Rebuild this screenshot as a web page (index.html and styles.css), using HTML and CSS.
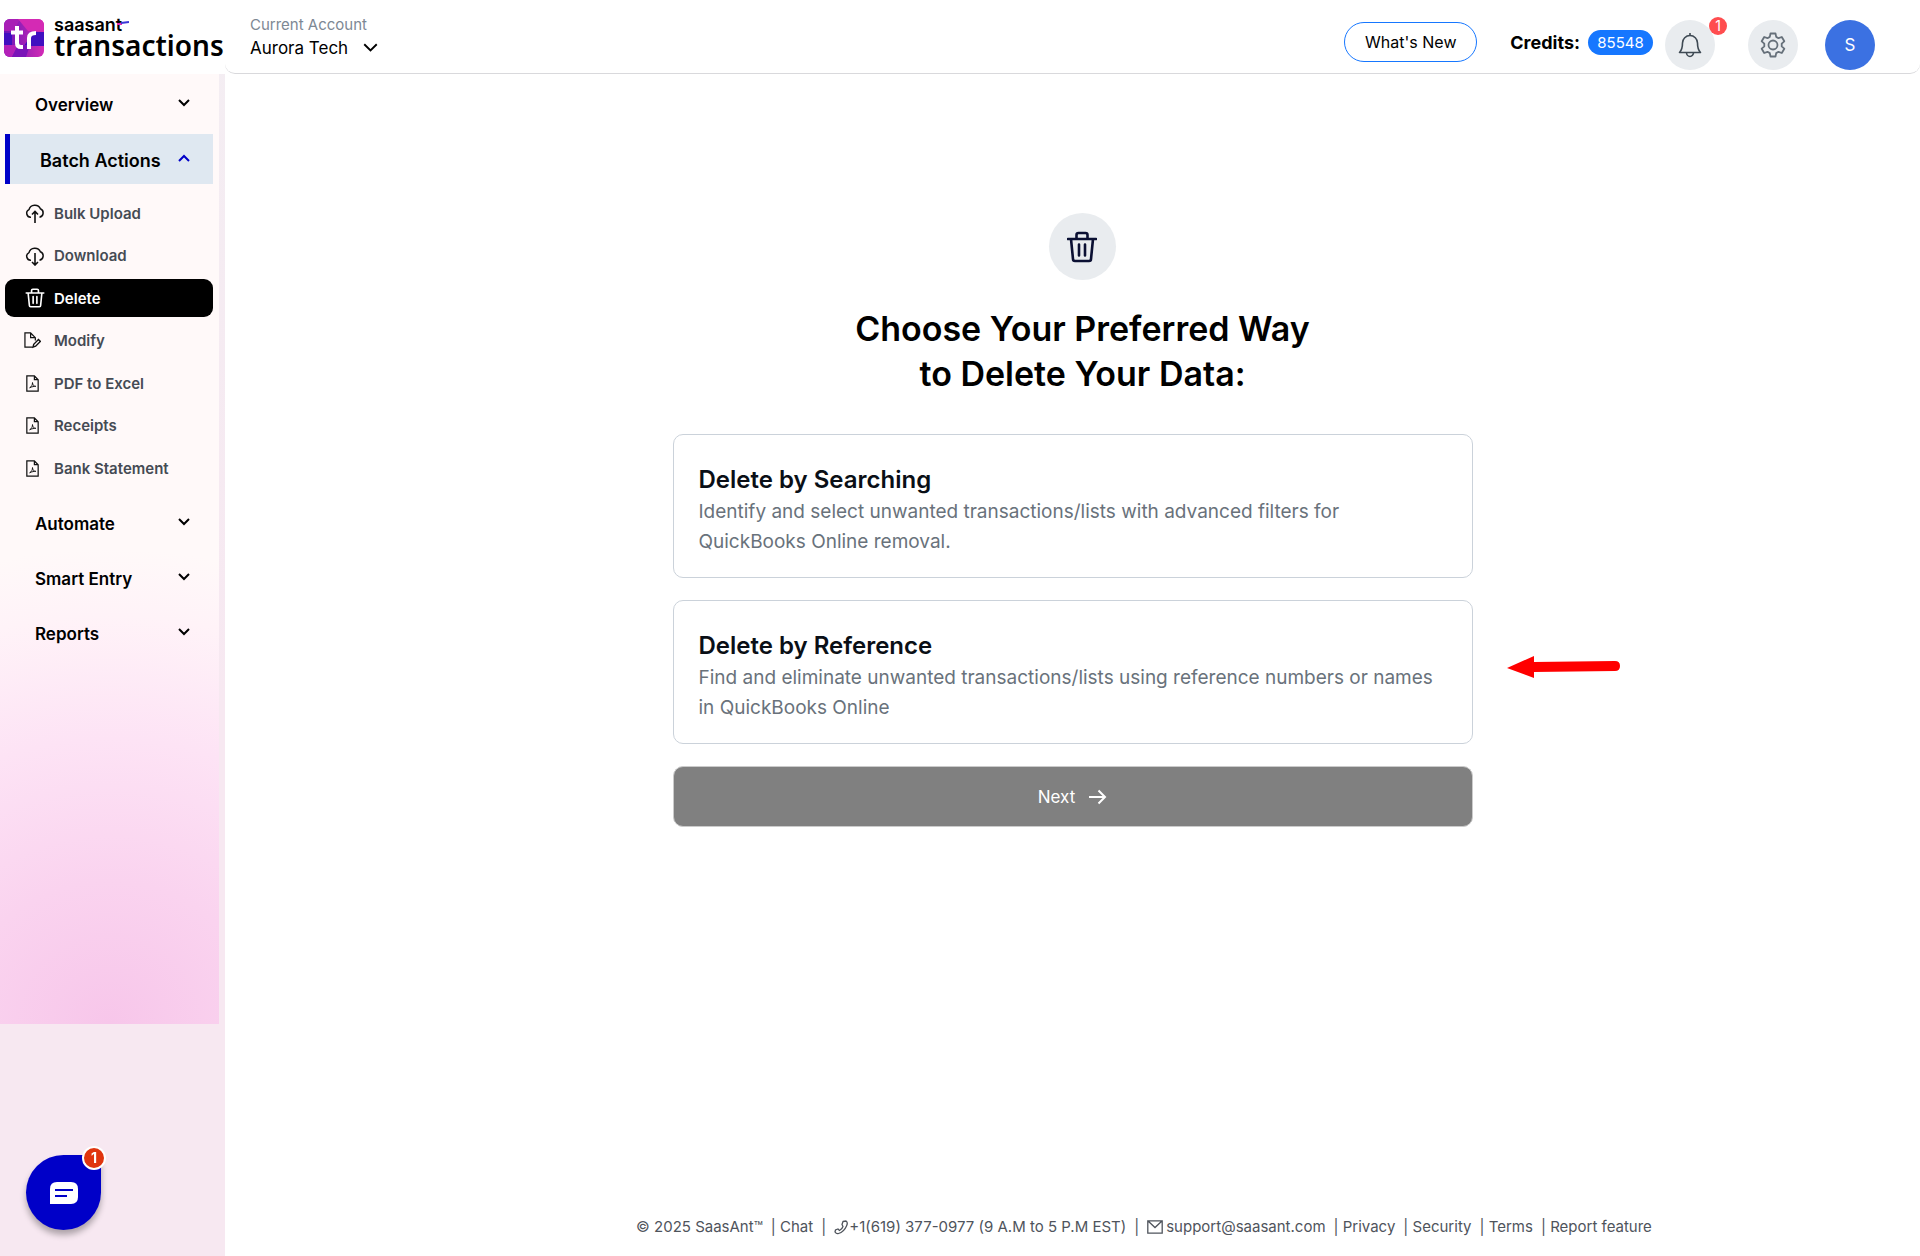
FILE: index.html
```html
<!DOCTYPE html>
<html lang="en">

<head>
  <meta charset="UTF-8">
  <title>SaasAnt Transactions</title>
  <link rel="stylesheet" href="styles.css">
</head>

<body>
  <!-- shared icons -->
  <svg class="sprite">
    <symbol id="chevron" viewBox="0 0 12 8">
      <path d="M1 1l5 5 5-5" fill="none" stroke="currentColor" />
    </symbol>
    <symbol id="trash" viewBox="0 0 30 32">
      <path d="M1 8h28M9.500 8V4q0-2 2-2h7q2 0 2 2v4M4 8l2 20q0 2 2 2h14q2 0 2-2l2-20M12 13.500v11M18 13.500v11" fill="none" stroke="currentColor" stroke-width="2.600" stroke-linecap="round" />
    </symbol>
    <symbol id="cloud" viewBox="0 0 20 20">
      <path d="M6 14.200A4 4 0 0 1 4 6.600A6 5.800 0 0 1 15.400 5.800A4.400 4.400 0 0 1 14.500 14.200" fill="none" stroke="currentColor" stroke-width="1.500" />
    </symbol>
    <symbol id="pdf" viewBox="0 0 14 18">
      <path d="M1 1h8l4 4v12H1zM9 1v4h4" fill="none" stroke="currentColor" stroke-width="1.300" />
      <path d="M4 13.500c2-1 3-3 3-5.500 0 2.500 1.500 4 3.500 4-2 0-4 .3-6.500 1.500z" fill="none" stroke="currentColor" />
    </symbol>
  </svg>

  <header class="header">
    <a class="logo" href="#">
      <svg class="logo-mark" viewBox="0 0 40 38">
        <defs>
          <linearGradient id="mark" x1="0" y1="0" x2="1" y2="0">
            <stop offset="0" stop-color="#6a16b8" />
            <stop offset="1" stop-color="#d32bb5" />
          </linearGradient>
          <clipPath id="mark-clip"><rect width="40" height="38" rx="6" /></clipPath>
        </defs>
        <g clip-path="url(#mark-clip)">
          <rect width="40" height="38" fill="url(#mark)" />
          <path d="M0 0h16L10 12H0z" fill="#a81fb6" />
          <path d="M0 14h8v12H0zM29 13h11v14H20z" fill="#4010c0" />
          <path d="M14 0h26v12H24z" fill="#d42ab4" />
          <path d="M0 26h14l-6 12H0z" fill="#b321b8" />
          <path d="M14 26h12l-4 12H8z" fill="#7a14b8" />
        </g>
        <path d="M13 7v17q0 4 4 4h2M7 13.500h12M25 30V19q0-5 7-5" fill="none" stroke="#fff" stroke-width="4" />
      </svg>
      <span class="logo-text">
        <span class="logo-top">saasant</span>
        <span class="logo-name">transactions</span>
      </span>
      <svg class="logo-dash" viewBox="0 0 12 4"><path d="M0 3h5" stroke="#e52bb0" stroke-width="2" /><path d="M4 2l8-1" stroke="#3a36d8" stroke-width="2" /></svg>
    </a>
    <div class="topbar">
      <div class="account">
        <span class="account-label">Current Account</span>
        <button class="account-name">Aurora Tech <svg class="account-arrow"><use href="#chevron" /></svg></button>
      </div>
      <div class="tools">
        <button class="whats-new">What's New</button>
        <span class="credits">Credits: <span class="credits-count">85548</span></span>
        <button class="round bell" aria-label="Notifications">
          <svg width="24" height="26" viewBox="0 0 24 26" fill="none" stroke="#3f4a54" stroke-width="1.600">
            <path d="M1.500 20.500c2.500-2.500 3-5 3-9.500a7.500 7.500 0 0 1 15 0c0 4.500.5 7 3 9.500z" stroke-linejoin="round" />
            <path d="M12 3.500V1M8.500 20.500a3.500 4 0 0 0 7 0" />
          </svg>
          <span class="bell-count">1</span>
        </button>
        <button class="round gear" aria-label="Settings">
          <svg width="26" height="26" viewBox="0 0 26 26" fill="none" stroke="#66707a" stroke-width="1.800" stroke-linejoin="round">
            <path d="M10.500 1.500h5l.7 3.400 2.300 1.300 3.300-1.200 2.500 4.300-2.600 2.300v2.800l2.600 2.300-2.500 4.300-3.300-1.200-2.300 1.300-.7 3.400h-5l-.7-3.400-2.300-1.300L4.200 21l-2.500-4.300 2.600-2.300v-2.800L1.700 9.300 4.200 5l3.300 1.200 2.300-1.300z" />
            <circle cx="13" cy="13" r="4.500" />
          </svg>
        </button>
        <button class="round avatar">S</button>
      </div>
    </div>
  </header>

  <div class="layout">
    <aside class="sidebar">
      <nav class="menu">
        <button class="group">Overview <svg class="arrow"><use href="#chevron" /></svg></button>
        <button class="group open">Batch Actions <svg class="arrow"><use href="#chevron" /></svg></button>
        <div class="submenu">
          <a class="item" href="#">
            <svg class="icon" viewBox="0 0 20 20"><use href="#cloud" /><path d="M10 20V9M7 11.500L10 8.500l3 3" fill="none" stroke="currentColor" stroke-width="1.600" /></svg>
            Bulk Upload
          </a>
          <a class="item" href="#">
            <svg class="icon" viewBox="0 0 20 20"><use href="#cloud" /><path d="M10 7v12M7 16l3 3 3-3" fill="none" stroke="currentColor" stroke-width="1.600" /></svg>
            Download
          </a>
          <a class="item active" href="#"><svg class="icon"><use href="#trash" /></svg>Delete</a>
          <a class="item" href="#">
            <svg class="icon file" viewBox="0 0 18 18"><path d="M9 16H1V1h6l5 5v3M7 1v5h5" fill="none" stroke="currentColor" stroke-width="1.300" /><path d="M9.500 16l.8-3 5-5 2 2-5 5z" fill="none" stroke="currentColor" stroke-width="1.500" /></svg>
            Modify
          </a>
          <a class="item" href="#"><svg class="icon file"><use href="#pdf" /></svg>PDF to Excel</a>
          <a class="item" href="#"><svg class="icon file"><use href="#pdf" /></svg>Receipts</a>
          <a class="item" href="#"><svg class="icon file"><use href="#pdf" /></svg>Bank Statement</a>
        </div>
        <button class="group">Automate <svg class="arrow"><use href="#chevron" /></svg></button>
        <button class="group">Smart Entry <svg class="arrow"><use href="#chevron" /></svg></button>
        <button class="group">Reports <svg class="arrow"><use href="#chevron" /></svg></button>
      </nav>
    </aside>

    <main class="main">
      <div class="intro">
        <div class="intro-icon"><svg width="30" height="32"><use href="#trash" /></svg></div>
        <h1>Choose Your Preferred Way<br>to Delete Your Data:</h1>
      </div>
      <div class="options">
        <button class="card">
          <span class="card-title">Delete by Searching</span>
          <span class="card-text">Identify and select unwanted transactions/lists with advanced filters for<br>QuickBooks Online removal.</span>
        </button>
        <button class="card">
          <span class="card-title">Delete by Reference</span>
          <span class="card-text">Find and eliminate unwanted transactions/lists using reference numbers or names<br>in QuickBooks Online</span>
          <svg class="pointer" viewBox="0 0 113 22"><path d="M0 12L27 0v6l81-1q5 0 5 5t-5 5l-81 1v6z" fill="#f00" /></svg>
        </button>
        <button class="next">Next
          <svg width="18" height="16" viewBox="0 0 18 16"><path d="M0 8h16M9.500 1.500L16 8l-6.500 6.500" fill="none" stroke="currentColor" stroke-width="2" /></svg>
        </button>
      </div>

      <footer class="footer">
        <span>© 2025 SaasAnt™</span>
        <span>| <a href="#">Chat</a></span>
        <span>|</span>
        <a class="contact" href="#"><svg width="14" height="15" viewBox="0 0 14 15"><path d="M9 1.500l3-.5c1.500 1 1.500 3 .5 5-1.500 3.500-4.500 6.500-8 7.500-1.500.5-2.500 0-3.500-1.500l.5-2 2.500-1 1.500 1.500c2-1 3-2.500 3.500-4L8 4.500z" fill="none" stroke="currentColor" stroke-width="1.300" /></svg>+1(619) 377-0977 (9 A.M to 5 P.M EST)</a>
        <span>|</span>
        <a class="contact mail" href="#"><svg width="16" height="14" viewBox="0 0 16 14"><path d="M.8.8h14.400v12.400H.8zM.8.8L8 7.500 15.200.8" fill="none" stroke="currentColor" stroke-width="1.300" /></svg>support@saasant.com</a>
        <span>| <a href="#">Privacy</a></span>
        <span>| <a href="#">Security</a></span>
        <span>| <a href="#">Terms</a></span>
        <span>| <a href="#">Report feature</a></span>
      </footer>
    </main>
  </div>

  <button class="chat" aria-label="Open chat">
    <svg width="28" height="22" viewBox="0 0 28 22">
      <path d="M7 0h14q7 0 7 7v8q0 7-7 7H0V7q0-7 7-7z" fill="#fff" />
      <path d="M5 8h18M5 14h12" stroke="#0000c8" stroke-width="2" />
    </svg>
    <span class="chat-count">1</span>
  </button>
</body>

</html>
```
FILE: styles.css
```css
* {
  box-sizing: border-box;
}

body {
  margin: 0;
  min-height: 100vh;
  display: flex;
  flex-direction: column;
  font-family: Inter, "Liberation Sans", sans-serif;
  color: #000;
  background: #fff;
}

button {
  margin: 0;
  padding: 0;
  border: none;
  background: none;
  font: inherit;
  color: inherit;
  cursor: pointer;
}

a {
  color: inherit;
  text-decoration: none;
}

.sprite {
  display: none;
}

/* header */
.header {
  display: flex;
  height: 74px;
}

.logo {
  position: relative;
  display: flex;
  gap: 10px;
  width: 225px;
  padding: 15px 0 0 4px;
}

.logo-mark {
  width: 40px;
  height: 38px;
  margin-top: 4px;
}

.logo-text {
  display: flex;
  flex-direction: column;
}

.logo-top {
  font-size: 18px;
  line-height: 20px;
  font-weight: 600;
}

.logo-name {
  font-family: "Noto Sans", sans-serif;
  font-size: 28px;
  line-height: 20px;
  font-weight: 600;
}

.logo-dash {
  position: absolute;
  left: 117px;
  top: 21px;
  width: 12px;
  height: 4px;
}

.topbar {
  flex: 1;
  display: flex;
  justify-content: space-between;
  padding: 0 45px 0 25px;
  border-bottom: 1px solid #d9d9dc;
  border-radius: 0 0 10px 10px;
}

.account {
  display: flex;
  flex-direction: column;
  align-items: flex-start;
  padding-top: 14px;
}

.account-label {
  font-size: 15px;
  line-height: 22px;
  color: #7d8894;
}

.account-name {
  display: flex;
  align-items: center;
  gap: 15px;
  font-size: 17px;
  line-height: 24px;
}

.account-arrow {
  width: 15px;
  height: 10px;
  stroke-width: 1.5;
}

.tools {
  display: flex;
  align-items: flex-start;
  padding-top: 20px;
}

.whats-new {
  width: 133px;
  height: 40px;
  margin: 2px 33px 0 0;
  border: 1px solid #1677ff;
  border-radius: 20px;
  font-size: 16px;
}

.credits {
  display: flex;
  align-items: center;
  gap: 8px;
  height: 44px;
  margin-right: 12px;
  font-size: 18px;
  font-weight: 700;
}

.credits-count {
  width: 65px;
  border-radius: 13px;
  background: #1677ff;
  color: #fff;
  font-size: 15px;
  line-height: 25px;
  font-weight: 400;
  text-align: center;
}

.round {
  position: relative;
  display: flex;
  align-items: center;
  justify-content: center;
  width: 50px;
  height: 50px;
  border-radius: 50%;
  background: #e9ecef;
}

.gear {
  margin: 0 27px 0 33px;
}

.bell-count {
  position: absolute;
  top: -3px;
  right: -12px;
  width: 18px;
  border-radius: 9px;
  background: #ff4d4f;
  color: #fff;
  font-size: 14px;
  line-height: 18px;
}

.avatar {
  background: #3b71e2;
  color: #fff;
  font-size: 17px;
}

/* sidebar */
.layout {
  flex: 1;
  display: flex;
}

.sidebar {
  width: 225px;
  background: linear-gradient(140deg, #f3eff3, #f7e8f1 60%);
}

.menu {
  display: flex;
  flex-direction: column;
  gap: 5px;
  width: 219px;
  min-height: 950px;
  padding: 5px 6px 0 5px;
  background: radial-gradient(ellipse 230% 50% at 50% 100%, #f7c6ea, #fad3ef 30%, #fde3f5 60%, #fff3f8 86%, #fff9f9);
}

.group {
  display: flex;
  align-items: center;
  justify-content: space-between;
  height: 50px;
  padding: 2px 23px 0 30px;
  font-size: 17px;
  font-weight: 600;
}

.group.open {
  border-left: 5px solid #0000c8;
  background: #dfe8f1;
  font-size: 18px;
}

.arrow {
  width: 12px;
  height: 8px;
  margin-bottom: 4px;
  stroke-width: 2;
}

.open .arrow {
  color: #0000c8;
  transform: rotate(180deg);
}

.submenu {
  display: flex;
  flex-direction: column;
  justify-content: space-between;
  height: 293px;
  margin: 5px 0 6px;
}

.item {
  display: flex;
  align-items: center;
  gap: 9px;
  height: 38px;
  padding-left: 20px;
  border-radius: 9px;
  color: #454b54;
  font-size: 15px;
  font-weight: 600;
}

.icon {
  width: 20px;
  height: 20px;
  color: #111;
}

.icon.file {
  width: 17px;
  height: 17px;
  margin: 0 4px 0 -1px;
}

.item.active,
.active .icon {
  background: #000;
  color: #fff;
}

/* main */
.main {
  flex: 1;
  display: flex;
  flex-direction: column;
  align-items: center;
  padding: 139px 20px 18px;
}

.intro {
  display: flex;
  flex-direction: column;
  align-items: center;
  margin-left: 20px;
}

.intro-icon {
  display: flex;
  align-items: center;
  justify-content: center;
  width: 67px;
  height: 67px;
  border-radius: 50%;
  background: #e9ecef;
  color: #0b1033;
}

h1 {
  margin: 26px 0 38px;
  font-size: 34px;
  line-height: 45px;
  font-weight: 600;
  text-align: center;
}

.options {
  display: flex;
  flex-direction: column;
  gap: 22px;
  width: 100%;
  max-width: 800px;
}

.card {
  position: relative;
  display: flex;
  flex-direction: column;
  padding: 28px 25px 20px;
  border: 1px solid #cbd2da;
  border-radius: 10px;
  text-align: left;
}

.card-title {
  color: #0a0f16;
  font-size: 24px;
  line-height: 34px;
  font-weight: 600;
}

.card-text {
  color: #69727b;
  font-size: 19px;
  line-height: 30px;
}

/* red arrow pointing at the card */
.pointer {
  position: absolute;
  left: 833px;
  top: 55px;
  width: 113px;
  height: 22px;
}

.next {
  display: flex;
  align-items: center;
  justify-content: center;
  gap: 14px;
  height: 61px;
  border: 1px solid #cbcbcb;
  border-radius: 10px;
  background: #808080;
  color: #fff;
  font-size: 17px;
}

.footer {
  display: flex;
  gap: 8px;
  margin-top: auto;
  margin-left: 143px;
  color: #4f545c;
  font-size: 15px;
  line-height: 22px;
}

.contact {
  display: flex;
  align-items: center;
  gap: 1px;
}

.mail {
  gap: 3px;
}

/* chat bubble */
.chat {
  position: fixed;
  left: 26px;
  bottom: 26px;
  display: flex;
  align-items: center;
  justify-content: center;
  width: 75px;
  height: 75px;
  border-radius: 50% 8px 50% 50%;
  background: #0000c8;
  box-shadow: 0 5px 6px rgba(0, 0, 0, 0.3);
}

.chat-count {
  position: absolute;
  top: -9px;
  right: -5px;
  width: 24px;
  border: 2px solid #fff;
  border-radius: 50%;
  background: #e0350f;
  color: #fff;
  font-size: 14px;
  line-height: 20px;
  font-weight: 700;
}
```
